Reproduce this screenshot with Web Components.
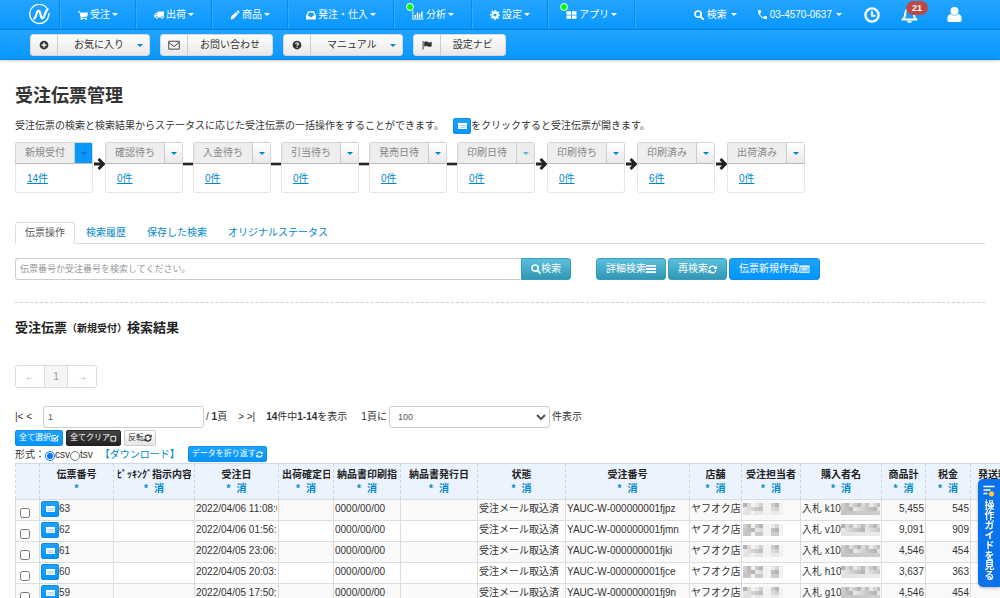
<!DOCTYPE html>
<html lang="ja">
<head>
<meta charset="utf-8">
<meta name="viewport" content="width=device-width, initial-scale=1">
<title>受注伝票管理</title>
<style>
html, body { margin: 0; padding: 0; background: #fff; }
body { font: 10px/16px "Liberation Sans", "Noto Sans CJK JP", sans-serif; color: #333; overflow-x: clip; }
</style>
</head>
<body>
<order-page></order-page>
<script>
const define = (name, html, setup) => customElements.define(name, class extends HTMLElement {
  connectedCallback() {
    if (this.shadowRoot) return;
    this.attachShadow({ mode: 'open' });
    this.shadowRoot.innerHTML = typeof html === 'function' ? html(this) : html;
    if (setup) setup(this, this.shadowRoot);
  }
});

/* ---------- icons ---------- */
const ICONS = {
  logo: ['0 0 22 22', '<g fill="none" stroke="currentColor" stroke-linecap="round"><path d="M18.5 4A10 10 0 1 0 20.8 10" stroke-width="1.4"/><path d="M5.5 15.5C7 14 7.500 12 8.500 8.500 9.500 6.500 11 7 11.500 9 12.200 12 13 15.500 14.500 15 16.500 14 16.500 8 19.500 5.500" stroke-width="2.300"/></g>'],
  cart: ['0 0 16 16', '<path d="M0 2h3l.6 2H16l-1 6.500-9.500 1 .3 1H14v1.300H4.600L2.300 3.400H0z"/><circle cx="5.700" cy="14.500" r="1.400"/><circle cx="13" cy="14.500" r="1.400"/>'],
  truck: ['0 0 16 16', '<path fill-rule="evenodd" d="M6 2.500h10v9.500h-1a2 2 0 0 0-4 0H6.500a2 2 0 0 0-4 0H.5V7.500L3 4.500h3zM2 8h3V6H3.600z"/><circle cx="4.500" cy="12.500" r="1.500"/><circle cx="13" cy="12.500" r="1.500"/>'],
  pencil: ['0 0 16 16', '<path d="M1 15l1-4.500L9.500 3 13 6.500 5.500 14zM10.500 2L12 .8q.8-.5 1.500.2l1.500 1.500q.7.700.1 1.500L14 5.500z"/>'],
  inbox: ['0 0 16 16', '<path fill-rule="evenodd" d="M3.500 2h9L16 9v5q0 1-1 1H1q-1 0-1-1V9zM4.800 4L2.500 9H5l1 2h4l1-2h2.500L11.200 4z"/>'],
  chart: ['0 0 18 16', '<path d="M0 1h1.500v12.500H18V15H0z"/><path d="M3.500 8h2.300v4.500H3.500zM7 4h2.300v8.500H7zM10.500 6h2.300v6.500h-2.300zM14 2.500h2.500v10H14z"/>'],
  cog: ['0 0 16 16', '<circle cx="8" cy="8" r="4.200" fill="none" stroke="currentColor" stroke-width="3.400"/><circle cx="8" cy="8" r="6.700" fill="none" stroke="currentColor" stroke-width="2.400" stroke-dasharray="2.800 2.462" stroke-dashoffset="1.400"/>'],
  tiles: ['0 0 16 16', '<path d="M0 2h7.300v5.400H0zM8.700 2H16v5.400H8.700zM0 8.800h7.300V14H0zM8.700 8.800H16V14H8.700z"/>'],
  search: ['0 0 16 16', '<circle cx="6.500" cy="6.500" r="5" fill="none" stroke="currentColor" stroke-width="2.600"/><path d="M10.500 10.500l4 4" stroke="currentColor" stroke-width="3" stroke-linecap="round"/>'],
  phone: ['3 3 18 18', '<path d="M6.620 10.790c1.440 2.830 3.760 5.140 6.590 6.590l2.200-2.200c.27-.27.67-.36 1.020-.24 1.120.37 2.330.57 3.570.57.550 0 1 .45 1 1V20c0 .55-.45 1-1 1-9.390 0-17-7.610-17-17 0-.55.450-1 1-1h3.500c.55 0 1 .45 1 1 0 1.250.2 2.450.57 3.570.11.350.03.740-.25 1.020z"/>'],
  clock: ['0 0 16 16', '<circle cx="8" cy="8" r="6.600" fill="none" stroke="currentColor" stroke-width="2.400"/><path d="M8 4v4.700h3.500" fill="none" stroke="currentColor" stroke-width="1.900"/>'],
  bell: ['0 0 18 18', '<path d="M9 2.500C5.500 3 4.500 5.500 4.500 8.500S3.500 13 1.500 14.300h15C14.500 13 13.500 11.500 13.500 8.500S12.500 3 9 2.500z" fill="none" stroke="currentColor" stroke-width="2" stroke-linejoin="round"/><path d="M9 .5v2" stroke="currentColor" stroke-width="2"/><path d="M6.500 15.500h5a2.500 2.300 0 0 1-5 0z"/>'],
  user: ['0 0 16 16', '<circle cx="8" cy="4.300" r="4.300"/><path d="M4 7.500Q8 10.800 12 7.500 15.500 8 15.700 13q0 3-3 3H3.300q-3 0-3-3Q.5 8 4 7.500z"/>'],
  plus: ['0 0 16 16', '<path fill-rule="evenodd" d="M8 1a7 7 0 1 1 0 14A7 7 0 0 1 8 1zM6.800 4v2.800H4v2.400h2.800V12h2.400V9.200H12V6.800H9.200V4z"/>'],
  mail: ['0 0 16 16', '<path d="M1 3h14v10.500H1zM1 4.500l7 5.500 7-5.500" fill="none" stroke="currentColor" stroke-width="1.200"/>'],
  help: ['0 0 16 16', '<circle cx="8" cy="8" r="7"/><path d="M5.600 6.300Q6 4.300 8 4.300T10.300 6.200Q10.300 7.300 8.200 8.200V9.300" fill="none" stroke="#fff" stroke-width="1.800"/><path d="M7.200 10.600h2v1.800h-2z" fill="#fff"/>'],
  flag: ['0 0 16 16', '<path d="M1 1.500h1.500V15H1zM3.500 3q3-1.800 6 0t6-.3V10q-3 1.800-6 .2t-6 .3z"/>'],
  list: ['0 0 16 16', '<path d="M0 1.500h16v3H0zM0 6.500h16v3H0zM0 11.500h16v3H0z"/>'],
  refresh: ['0 0 16 16', '<path d="M2 7A6.200 6.200 0 0 1 13 4.500M14 9A6.200 6.200 0 0 1 3 11.500" fill="none" stroke="currentColor" stroke-width="2.600"/><path d="M15.500 1v6h-6zM.5 15V9h6z"/>'],
  card: ['0 0 16 16', '<path fill-rule="evenodd" d="M0 2.500h16v11.500H0zM1.500 5.500v7h13v-7zM3 6.500h10v1H3zM3 8.500h10v1H3zM3 10.500h10v1H3z"/>'],
  sheet: ['0 0 12 10', '<rect y="1" width="12" height="8" fill="#fff"/><path d="M2 4.500h8M2 6.700h8" stroke="#59b8ff" stroke-width=".9"/><path d="M3.800 4v3.500" stroke="#fff" stroke-width=".6"/>'],
  check: ['0 0 16 16', '<path d="M13 9v5H2V3h8" fill="none" stroke="currentColor" stroke-width="2"/><path d="M4.500 7.500l3 3L15 3" fill="none" stroke="currentColor" stroke-width="2.600"/>'],
  square: ['0 0 16 16', '<path d="M2 3h11v11H2z" fill="none" stroke="currentColor" stroke-width="2.200"/>'],
  arrow: ['0 0 12 14', '<path d="M1 7h9M5.500 2l5 5-5 5" fill="none" stroke="currentColor" stroke-width="3"/>'],
  dash: ['0 0 10 14', '<path d="M0 7h10" stroke="currentColor" stroke-width="2.600"/>'],
  guide: ['0 0 12 12', '<path d="M1 1.500h10M1 5h6M1 8.500h3" stroke="#fff" stroke-width="1.400" stroke-linecap="round"/><circle cx="8.500" cy="8.800" r="2.600" fill="#fc3"/>']
};
define('ui-icon', el => {
  const [box, body] = ICONS[el.getAttribute('name')];
  const w = el.getAttribute('w') || 10, h = el.getAttribute('h') || w;
  return `<style>:host{display:inline-flex;flex:none}svg{display:block;width:${w}px;height:${h}px;fill:currentColor}</style><svg viewBox="${box}" aria-hidden="true">${body}</svg>`;
});
define('ui-caret', `<style>:host{display:inline-block;flex:none;border:3px solid transparent;border-top-color:currentColor;border-bottom:0}</style>`);

/* ---------- buttons ---------- */
define('ui-button', `<style>
:host{display:inline-flex;flex:none}
button{font:inherit;line-height:20px;height:22px;margin:0;padding:0 9px;display:inline-flex;align-items:center;justify-content:center;
 color:#fff;border:1px solid #0d8ce8;border-radius:3px;background:linear-gradient(#1fa2ff,#0095ff);white-space:nowrap;cursor:pointer}
:host([tone=info]) button{background:linear-gradient(#5bc0de,#2f96b4);border-color:#3a9dba}
:host([tone=dark]) button{background:linear-gradient(#444,#222);border-color:#222}
:host([tone=plain]) button{background:linear-gradient(#fff,#e6e6e6);border-color:#ccc;color:#333}
:host([small]) button{font-size:8px;height:16px;line-height:14px;padding:0 3px;border-radius:2px}
:host([end]) button{border-radius:0 3px 3px 0}
</style><button type="button"><slot></slot></button>`);
define('sheet-button', `<style>:host{display:inline-flex;flex:none;vertical-align:top}
button{width:18px;height:16px;margin:0;padding:0;display:flex;align-items:center;justify-content:center;border:1px solid #0d8ce8;border-radius:2px;background:linear-gradient(#1fa2ff,#0095ff);cursor:pointer}
</style><button type="button" aria-label="受注伝票を開く"><ui-icon name="sheet" w="9" h="8"></ui-icon></button>`);

/* ---------- header ---------- */
define('nav-item', el => `<style>
:host{display:flex;border-right:1px solid #0c8ae8;box-shadow:1px 0 #33a9ff}
a{position:relative;display:flex;align-items:center;gap:2px;padding:0 17px 0 18px;color:#fff;text-decoration:none;white-space:nowrap}
.dot{position:absolute;left:12px;top:3px;width:6px;height:6px;border:1px solid #fff;border-radius:50%;background:#0f0}
</style><a href="#">${el.hasAttribute('news') ? '<span class="dot"></span>' : ''}<ui-icon name="${el.getAttribute('icon')}" w="${el.getAttribute('w') || 10}" h="10"></ui-icon><slot></slot><ui-caret></ui-caret></a>`);
define('tool-button', el => `<style>
:host{display:flex}
.b{display:flex;box-sizing:border-box;height:22px;border:1px solid #d8d8d8;border-radius:3px;background:linear-gradient(#fff,#e8e8e8);overflow:hidden}
button{font:inherit;color:#333;background:none;border:0;margin:0;padding:0;display:flex;align-items:center;justify-content:center;cursor:pointer}
.i{width:27px;border-right:1px solid #ccc}
.t{padding:0 12px;gap:13px}
.c{padding:0 6px 0 16px}
ui-caret{color:#08c}
</style><span class="b"><button type="button" class="i" aria-label="${el.textContent}"><ui-icon name="${el.getAttribute('icon')}" w="${el.getAttribute('w') || 10}"></ui-icon></button>
<button type="button" class="${el.hasAttribute('menu') ? 't c' : 't'}"><slot></slot>${el.hasAttribute('menu') ? '<ui-caret></ui-caret>' : ''}</button></span>`);
define('app-header', `<style>
:host{display:block}
.bar{box-sizing:border-box;height:30px;display:flex;background:linear-gradient(#22a4ff,#0a98ff);border-bottom:1px solid #0a85de;color:#fff}
.tools{padding:4px 30px 0;gap:10px;align-items:flex-start;box-shadow:0 1px 3px #0003}
.brand{display:flex;align-items:center;padding:0 9px 0 29px;color:#fff;border-right:1px solid #0c8ae8;box-shadow:1px 0 #33a9ff}
.right{margin-left:auto;display:flex;align-items:center;padding-right:38px}
.right a{display:flex;align-items:center;color:#fff;text-decoration:none;position:relative}
.s{gap:3px;margin-right:21px}.s ui-caret,.p ui-caret{margin-left:1px}
.p{gap:3px;margin-right:22px}
.k{margin-right:21px}.n{margin-right:29px}
.badge{position:absolute;left:5px;top:-5px;box-sizing:border-box;width:22px;height:14px;border-radius:7px;background:#b94a48;font-weight:bold;font-size:9px;line-height:14px;text-align:center}
</style>
<nav class="bar"><a class="brand" href="#" aria-label="ホーム"><ui-icon name="logo" w="21"></ui-icon></a>
<nav-item icon="cart">受注</nav-item><nav-item icon="truck">出荷</nav-item><nav-item icon="pencil">商品</nav-item><nav-item icon="inbox">発注・仕入</nav-item><nav-item icon="chart" w="12" news>分析</nav-item><nav-item icon="cog">設定</nav-item><nav-item icon="tiles" w="11" news>アプリ</nav-item>
<div class="right"><a class="s" href="#"><ui-icon name="search"></ui-icon>検索<ui-caret></ui-caret></a><a class="p" href="#"><ui-icon name="phone" w="9"></ui-icon>03-4570-0637<ui-caret></ui-caret></a>
<a class="k" href="#" aria-label="履歴"><ui-icon name="clock" w="16"></ui-icon></a><a class="n" href="#"><ui-icon name="bell" w="17"></ui-icon><span class="badge">21</span></a><a href="#" aria-label="ユーザー"><ui-icon name="user" w="15"></ui-icon></a></div></nav>
<div class="bar tools"><tool-button icon="plus" menu>お気に入り</tool-button><tool-button icon="mail" w="12">お問い合わせ</tool-button><tool-button icon="help" menu>マニュアル</tool-button><tool-button icon="flag">設定ナビ</tool-button></div>`);

/* ---------- status flow ---------- */
define('status-card', el => `<style>
:host{display:block;flex:none;width:78px;box-sizing:border-box;height:51px;border:1px solid #e5e5e5;border-radius:3px;background:#fff}
.h{display:flex;box-sizing:border-box;height:22px;margin:-1px -1px 0;border:1px solid;border-color:#d4d4d4 #d4d4d4 #bbb;border-radius:3px 3px 0 0}
button{font:inherit;margin:0;border:0;padding:0;cursor:pointer}
.l{flex:1;padding-left:9px;text-align:left;background:#eee;color:#888;white-space:nowrap}
.m{width:18px;display:flex;align-items:center;justify-content:center;background:linear-gradient(#fff,#e9e9e9);border-left:1px solid #ccc;color:#08c}
:host([state=on]) .m{background:#0a98ff;color:#0673c6}
:host([state=off]) .m{background:#ececec;color:#59b4e3}
a{display:inline-block;margin:7px 0 0 11px;color:#08c}
</style><div class="h"><button type="button" class="l"><slot></slot></button><button type="button" class="m" aria-label="メニュー"><ui-caret></ui-caret></button></div><a href="#">${el.getAttribute('count')}件</a>`);
define('status-flow', `<style>:host{display:flex;align-items:flex-start}ui-icon{margin-top:15px;color:#222}</style>` +
  [['新規受付', 14, 'arrow', 'on'], ['確認待ち', 0, 'dash'], ['入金待ち', 0, 'dash'], ['引当待ち', 0, 'dash'], ['発売日待', 0, 'dash'], ['印刷日待', 0, 'arrow', 'off'], ['印刷待ち', 0, 'arrow'], ['印刷済み', 6, 'arrow'], ['出荷済み', 0]]
  .map(([t, n, link, s]) => `<status-card count="${n}" state="${s || ''}">${t}</status-card>` + (link ? `<ui-icon name="${link}" w="${link === 'arrow' ? 12 : 10}" h="14"></ui-icon>` : '')).join(''));

/* ---------- tabs and search ---------- */
define('page-tabs', `<style>
:host{display:flex;gap:1px;border-bottom:1px solid #ddd;height:21px}
a{padding:0 10px;line-height:21px;color:#08c;text-decoration:none}
a.on{margin-bottom:-1px;padding:0 9px;border:1px solid #ddd;border-bottom:0;border-radius:3px 3px 0 0;background:#fff;color:#555;line-height:20px}
</style><a href="#" class="on" aria-current="page">伝票操作</a><a href="#">検索履歴</a><a href="#">保存した検索</a><a href="#">オリジナルステータス</a>`);
define('slip-search', `<style>
:host{display:flex;gap:2px}
.g{display:flex;flex:1;max-width:556px;margin-right:23px}
input{flex:1;min-width:0;box-sizing:border-box;height:22px;margin:0;padding:0 4px;border:1px solid #ccc;border-right:0;border-radius:3px 0 0 3px;font:9px "Liberation Sans","Noto Sans CJK JP",sans-serif;color:#555}
input::placeholder{color:#999}
</style><div class="g"><input type="text" aria-label="伝票番号検索" placeholder="伝票番号か受注番号を検索してください。"><ui-button tone="info" end><ui-icon name="search"></ui-icon>検索</ui-button></div>
<ui-button tone="info">詳細検索<ui-icon name="list"></ui-icon></ui-button><ui-button tone="info">再検索<ui-icon name="refresh" w="9"></ui-icon></ui-button><ui-button>伝票新規作成<ui-icon name="card" w="11" h="10"></ui-icon></ui-button>`);

/* ---------- paging and list actions ---------- */
define('page-links', `<style>
:host{display:flex;width:fit-content;border:1px solid #ddd;border-radius:3px}
a{display:block;box-sizing:border-box;width:28px;line-height:21px;text-align:center;color:#999;text-decoration:none}
.on{width:24px;background:#f5f5f5;border:solid #ddd;border-width:0 1px}
</style><a href="#">←</a><a href="#" class="on">1</a><a href="#">→</a>`);
define('page-range', `<style>
:host{display:flex;align-items:center;white-space:pre}
input,select{box-sizing:border-box;height:22px;width:161px;margin:0;border:1px solid #ccc;border-radius:3px;background:#fff;font:9px "Liberation Sans",sans-serif;color:#555;padding:0 4px}
.f{width:28px}.t{margin-left:2px}.l{margin-left:11px}.n{margin:0 14px 0 11px}.u{margin:0 2px}
</style><span class="f">|&lt; &lt;</span><input type="text" value="1" aria-label="ページ番号"><span class="t">/ <b>1</b>頁</span><span class="l">&gt; &gt;|</span><span class="n"><b>14</b>件中<b>1-14</b>を表示</span><label for="per">1頁に</label><select id="per" class="u"><option>100</option></select><span>件表示</span>`);
define('list-actions', `<style>
:host{display:block}
.r{display:flex;gap:3px}
.f{display:flex;align-items:center;height:17px}
input{width:10px;height:10px;margin:3px 0 0}
label{display:flex;align-items:center}
a{color:#08c;text-decoration:none;margin:0 8px 0 7px}
.f ui-button{align-self:flex-start}
</style><div class="r"><ui-button small>全て選択<ui-icon name="check" w="8"></ui-icon></ui-button><ui-button small tone="dark">全てクリア<ui-icon name="square" w="7"></ui-icon></ui-button><ui-button small tone="plain">反転<ui-icon name="refresh" w="8"></ui-icon></ui-button></div>
<div class="f">形式：<label><input type="radio" name="fmt" checked>csv</label><label><input type="radio" name="fmt">tsv</label><a href="#">【ダウンロード】</a><ui-button small>データを折り返す<ui-icon name="refresh" w="7"></ui-icon></ui-button></div>`);

/* ---------- table ---------- */
define('masked-text', el => {
  const seed = +el.getAttribute('seed'), dense = el.hasAttribute('dense');
  let r = '';
  for (let x = 0; x < 10; x++) for (let y = 0; y < 3; y++) {
    const gap = !dense && (x > 4 && x < 7 || x === 2 && y !== 1 || x === 9);
    const v = gap ? 242 : 178 + (x * 37 + y * 53 + seed * 29 + x * y * 11) % 58;
    r += `<rect x="${x * 4}" y="${y * 4}" width="4" height="4" fill="rgb(${v},${v},${v})"/>`;
  }
  return `<style>:host{display:inline-flex;flex:none;margin-top:3px}svg{display:block;width:40px;height:12px}</style><svg viewBox="0 0 40 12" shape-rendering="crispEdges" aria-label="非表示">${r}</svg>`;
});
define('slip-table', () => {
  const cols = [['', 24], ['伝票番号', 74], ['ﾋﾟｯｷﾝｸﾞ指示内容', 81], ['受注日', 84], ['出荷確定日', 55], ['納品書印刷指', 67], ['納品書発行日', 77], ['状態', 88], ['受注番号', 124], ['店舗', 52], ['受注担当者', 59], ['購入者名', 81], ['商品計', 44], ['税金', 45], ['発送料', 45]];
  const rows = [['63', '06 11:08:0', 'pz', 'k', '5,455', '545'], ['62', '06 01:56:', 'mn', 'v', '9,091', '909'], ['61', '05 23:06:', 'ki', 'x', '4,546', '454'], ['60', '05 20:03:', 'ce', 'h', '3,637', '363'], ['59', '05 17:50:', '9n', 'g', '4,546', '454']];
  const td = (c, k = '') => `<td class="${k}"><div>${c}</div></td>`;
  return `<style>
:host{display:block;overflow:hidden}
table{border-collapse:collapse;table-layout:fixed;width:${cols.reduce((s, c) => s + c[1], 0)}px}
th,td{border:1px solid #ddd;padding:0 1px;vertical-align:top;text-align:left;font-weight:normal}
th{height:35px;padding:0 3px;background:conic-gradient(#e2eefd 25%,#f1f7ff 0 50%,#e2eefd 0 75%,#f1f7ff 0) 0 0/2px 2px;border-style:solid dashed;border-color:#cfdae6 #ccd6e2 #ddd}
th div{overflow:hidden;white-space:nowrap;text-align:center;font-weight:bold;color:#222;line-height:14px;padding-top:4px}
th a{color:#08c;text-decoration:none}
th p{margin:0;display:flex;gap:6px;justify-content:center;font-weight:bold;line-height:14px}
td{height:20px}
td div{display:flex;height:20px;overflow:hidden;white-space:pre;line-height:18px}
tr:nth-child(odd) td{background:#f9f9f9}
.r div{justify-content:flex-end}
.id div{padding-top:1px;height:19px;line-height:16px}
input{width:10px;height:10px;margin:8px 0 0 3px}
</style><table><colgroup>${cols.map(c => `<col style="width:${c[1]}px">`).join('')}</colgroup>
<thead><tr>${cols.map(([t], i) => `<th scope="col"><div>${t}</div>${i ? `<p><a href="#">*</a>${i > 1 ? '<a href="#">消</a>' : ''}</p>` : ''}</th>`).join('')}</tr></thead>
<tbody>${rows.map((r, i) => '<tr>' + td(`<input type="checkbox" aria-label="伝票${r[0]}を選択">`) + td(`<sheet-button></sheet-button>${r[0]}`, 'id') + td('') + td('2022/04/' + r[1]) + td('') + td('0000/00/00') + td('') + td('受注メール取込済') + td('YAUC-W-000000001fj' + r[2]) + td('ヤフオク店') + td(`<masked-text seed="${i}"></masked-text>`) + td(`入札 ${r[3]}10<masked-text dense seed="${i + 3}"></masked-text>`) + td(r[4], 'r') + td(r[5], 'r') + td('') + '</tr>').join('')}</tbody></table>`;
});

define('guide-tab', `<style>
:host{position:fixed;right:0;bottom:11px}
button{box-sizing:border-box;width:22px;height:108px;margin:0;padding:6px 0 0;border:0;border-radius:5px 0 0 5px;background:#0a73eb;color:#fff;font:bold 10px/22px "Noto Sans CJK JP",sans-serif;display:flex;flex-direction:column;align-items:center;gap:3px;box-shadow:0 1px 3px #0004;cursor:pointer}
span{writing-mode:vertical-rl}
</style><button type="button"><ui-icon name="guide" w="12"></ui-icon><span>操作ガイドを見る</span></button>`);

define('order-page', `<style>
:host{display:block}
main{padding:24px 15px 0}
h1{margin:0;font-size:18px;line-height:24px;color:#333}
.lead{display:flex;align-items:center;margin:10px 0 8px}
.lead sheet-button{margin-left:9px}
page-tabs{margin-top:29px}
slip-search{margin-top:14px}
hr{margin:22px 0 17px;border:0;border-top:1px dashed #ccc}
h2{margin:0 0 28px;font-size:13px;line-height:16px;color:#222}
h2 small{font-size:10px}
page-range{margin:18px 0 2px}
slip-table{margin-right:-15px}
</style><app-header></app-header>
<main><h1>受注伝票管理</h1>
<div class="lead">受注伝票の検索と検索結果からステータスに応じた受注伝票の一括操作をすることができます。<sheet-button></sheet-button>をクリックすると受注伝票が開きます。</div>
<status-flow></status-flow><page-tabs></page-tabs><slip-search></slip-search><hr>
<h2>受注伝票<small>（新規受付）</small>検索結果</h2>
<page-links></page-links><page-range></page-range><list-actions></list-actions><slip-table></slip-table></main>
<guide-tab></guide-tab>`);
</script>
</body>
</html>
